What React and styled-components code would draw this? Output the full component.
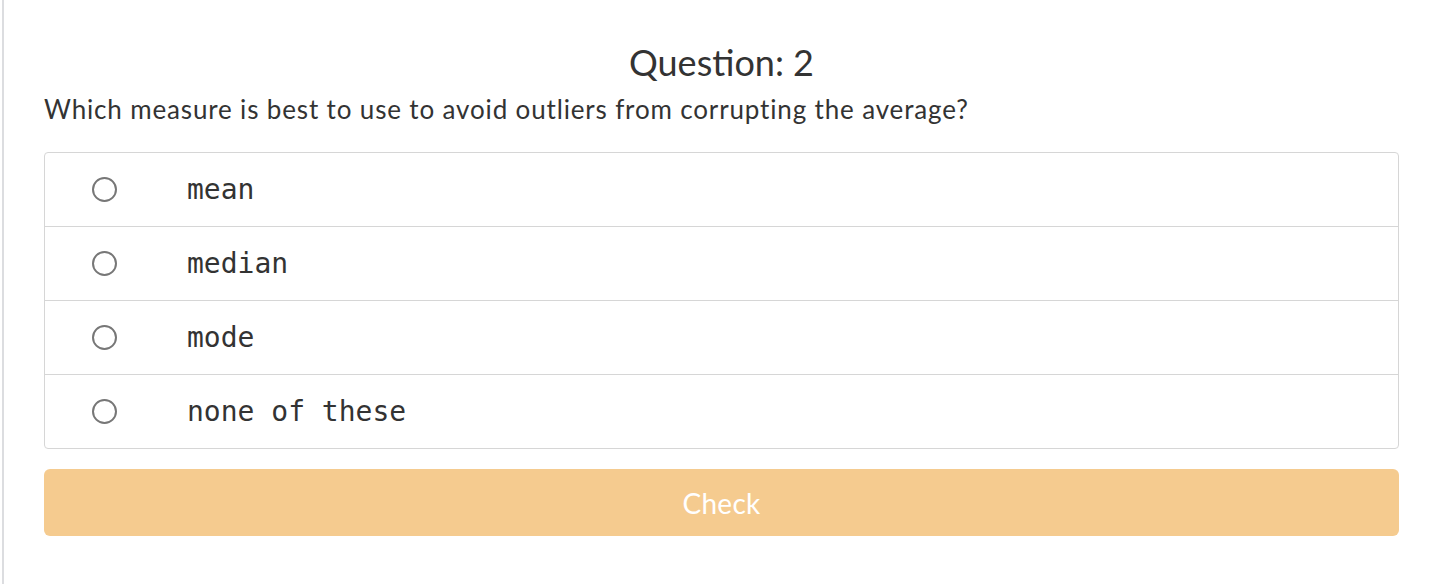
import React, { useState } from 'react'
import styled, { createGlobalStyle } from 'styled-components'

const GlobalStyle = createGlobalStyle`
    html, body {
        margin: 0;
        padding: 0;
        background: #fff;
    }
    body {
        font-family: Lato, "Open Sans", sans-serif;
        color: #333;
    }
`

const Page = styled.div`
    margin-left: 2px;
    border-left: 2px solid #dcdde0;
    min-height: 584px;
    box-sizing: border-box;
    padding: 42px 39px 40px 40px;
`

const Title = styled.h2`
    margin: 0;
    text-align: center;
    font-size: 36px;
    font-weight: 400;
    line-height: 40px;
    color: #333;
`

const Prompt = styled.p`
    margin: 10px 0 0;
    font-size: 26px;
    letter-spacing: 0.85px;
    line-height: 34px;
    color: #333;
`

const Options = styled.div`
    margin-top: 26px;
    border: 1px solid #d6d6d6;
    border-radius: 4px;
    background: #fff;
`

const Option = styled.label`
    display: flex;
    align-items: center;
    height: 73px;
    cursor: pointer;
    & + & {
        border-top: 1px solid #d6d6d6;
    }
`

const Radio = styled.span`
    width: 25px;
    height: 25px;
    box-sizing: border-box;
    border-radius: 50%;
    border: 2px solid ${p => (p.$checked ? '#f0a93b' : '#777')};
    margin-left: 47px;
    flex-shrink: 0;
    display: flex;
    align-items: center;
    justify-content: center;
    &::after {
        content: '';
        display: ${p => (p.$checked ? 'block' : 'none')};
        width: 11px;
        height: 11px;
        border-radius: 50%;
        background: #f0a93b;
    }
`

const Answer = styled.code`
    margin-left: 70px;
    font-family: "DejaVu Sans Mono", "Liberation Mono", monospace;
    font-size: 28px;
    color: #333;
`

const CheckButton = styled.button`
    display: block;
    width: 100%;
    height: 67px;
    margin-top: 20px;
    border: 0;
    border-radius: 6px;
    background: #f5cb8f;
    color: #fff;
    font-family: Lato, "Open Sans", sans-serif;
    font-size: 28px;
    letter-spacing: 0.3px;
    cursor: not-allowed;
`

const answers = ['mean', 'median', 'mode', 'none of these']

const App = () => {
    const [picked, setPicked] = useState(null)
    return (
        <>
            <GlobalStyle />
            <Page>
                <Title>Question: 2</Title>
                <Prompt>Which measure is best to use to avoid outliers from corrupting the average?</Prompt>
                <Options>
                    {answers.map((a, i) => (
                        <Option key={a} onClick={() => setPicked(i)}>
                            <Radio $checked={picked === i} />
                            <Answer>{a}</Answer>
                        </Option>
                    ))}
                </Options>
                <CheckButton disabled={picked === null}>Check</CheckButton>
            </Page>
        </>
    )
}

export default App
